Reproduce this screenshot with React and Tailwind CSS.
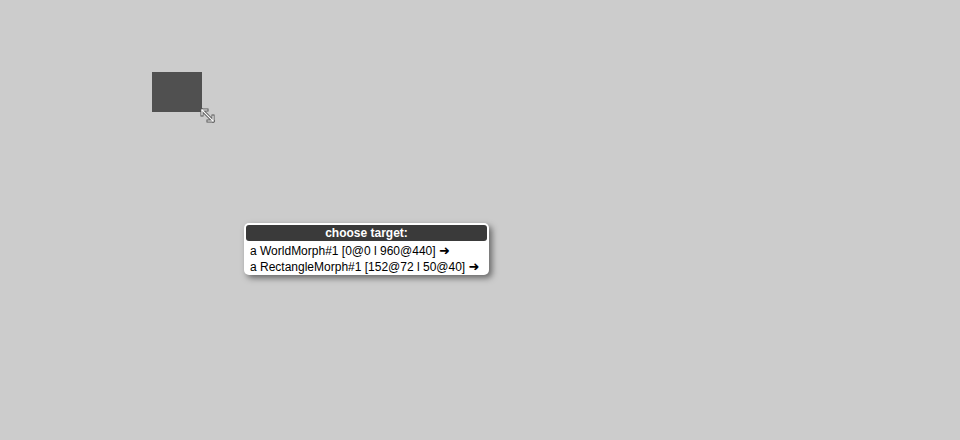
import React from 'react';

const items = [
  'a WorldMorph#1 [0@0 l 960@440]',
  'a RectangleMorph#1 [152@72 l 50@40]',
];

export default function App() {
  return (
    <div className="relative w-[960px] h-[440px] bg-[#cccccc] overflow-hidden font-['Liberation_Sans',Arial,sans-serif]">
      {/* the rectangle morph */}
      <div className="absolute left-[152px] top-[72px] w-[50px] h-[40px] bg-[#505050]" />

      {/* resize handle */}
      <svg className="absolute left-[199px] top-[107px]" width="17" height="17" viewBox="0 0 17 17">
        <g fill="none" strokeLinecap="square">
          <g stroke="#555" strokeWidth="3">
            <path d="M3 3 L14 14" />
            <path d="M3 3 L3 8 M3 3 L8 3" />
            <path d="M14 14 L14 9 M14 14 L9 14" />
          </g>
          <g stroke="#fff" strokeWidth="1.2">
            <path d="M3 3 L14 14" />
            <path d="M3 3 L3 8 M3 3 L8 3" />
            <path d="M14 14 L14 9 M14 14 L9 14" />
          </g>
        </g>
      </svg>

      {/* choose target menu */}
      <div className="absolute left-[244px] top-[223px] w-[245px] bg-white rounded-[5px] px-[2px] pt-[2px] shadow-[3px_3px_6px_rgba(0,0,0,0.5)]">
        <div className="h-[16px] rounded-[3px] bg-[#3a3a3a] text-white font-bold text-[12px] leading-[16px] text-center">
          choose target:
        </div>
        <div className="pt-[2px]">
          {items.map((t) => (
            <div key={t} className="h-[16px] px-[4px] text-[12px] leading-[16px] text-black whitespace-nowrap">
              {t} <span className="font-['DejaVu_Sans',sans-serif] font-bold text-[13px] leading-[16px]">➜</span>
            </div>
          ))}
        </div>
      </div>
    </div>
  );
}
